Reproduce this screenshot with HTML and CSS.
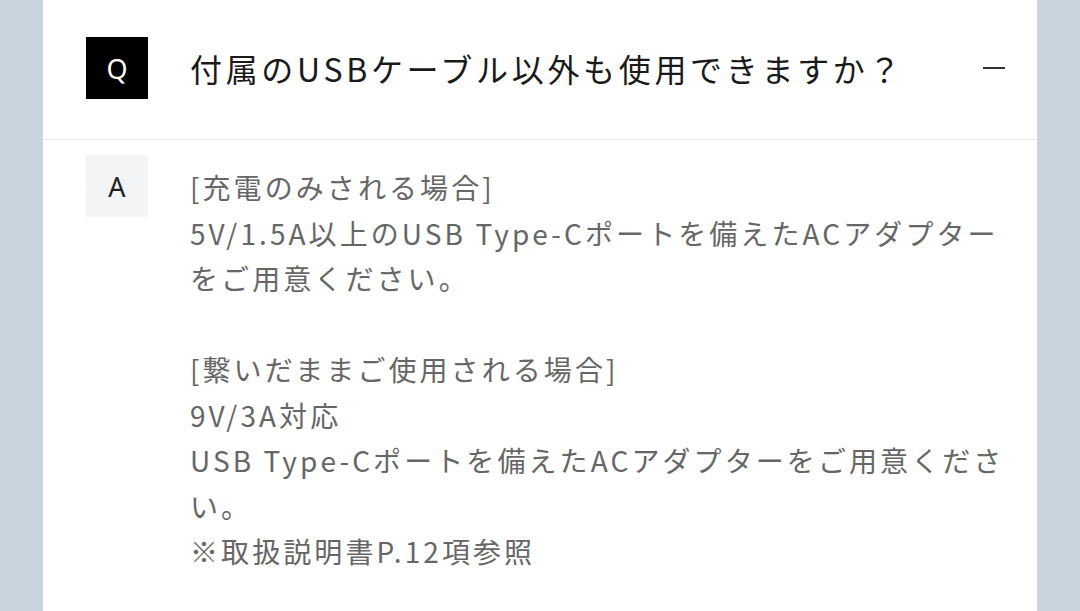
FILE: index.html
```html
<!DOCTYPE html>
<html lang="ja">
<head>
<meta charset="utf-8">
<link rel="stylesheet" href="styles.css">
</head>
<body>
<div class="page">
  <div class="card">
    <div class="question">
      <div class="badge badge-q">Q</div>
      <div class="q-text">付属のUSBケーブル以外も使用できますか？</div>
      <div class="toggle"><span class="minus"></span></div>
    </div>
    <div class="answer">
      <div class="badge badge-a">A</div>
      <div class="a-text">[充電のみされる場合]<br>5V/1.5A以上のUSB Type-Cポートを備えたACアダプターをご用意ください。<br><br>[繋いだままご使用される場合]<br>9V/3A対応<br>USB Type-Cポートを備えたACアダプターをご用意ください。<br>※取扱説明書P.12項参照</div>
    </div>
  </div>
</div>
</body>
</html>
```

FILE: styles.css
```css
html, body {
  margin: 0;
  padding: 0;
  height: 100%;
  overflow: hidden;
}
body {
  background: #c9d4de;
  font-family: "Noto Sans CJK JP", "Noto Sans", sans-serif;
}
.page {
  padding: 0 43px;
  height: 100%;
}
.card {
  background: #fff;
  height: 100%;
}
.question {
  display: flex;
  align-items: center;
  padding: 37px 32px 40px 43px;
  border-bottom: 1px solid #e6e6e6;
}
.badge {
  flex: none;
  width: 62px;
  height: 62px;
  display: flex;
  align-items: center;
  justify-content: center;
  font-family: "Noto Sans", sans-serif;
  font-size: 27px;
}
.badge-q {
  background: #000;
  color: #fff;
}
.badge-a {
  background: #f3f4f6;
  color: #222;
}
.q-text {
  flex: 1;
  margin-left: 42px;
  font-size: 32px;
  letter-spacing: 0.115em;
  color: #1a1a1a;
  line-height: 1.4;
}
.toggle {
  flex: none;
  width: 22px;
  height: 22px;
  display: flex;
  align-items: center;
}
.minus {
  display: block;
  width: 22px;
  height: 2px;
  background: #333;
}
.answer {
  display: flex;
  align-items: flex-start;
  padding: 15px 32px 0 43px;
}
.a-text {
  flex: 1;
  margin-left: 42px;
  margin-top: 10px;
  font-size: 28px;
  letter-spacing: 0.11em;
  line-height: 45.5px;
  color: #666;
}
```
